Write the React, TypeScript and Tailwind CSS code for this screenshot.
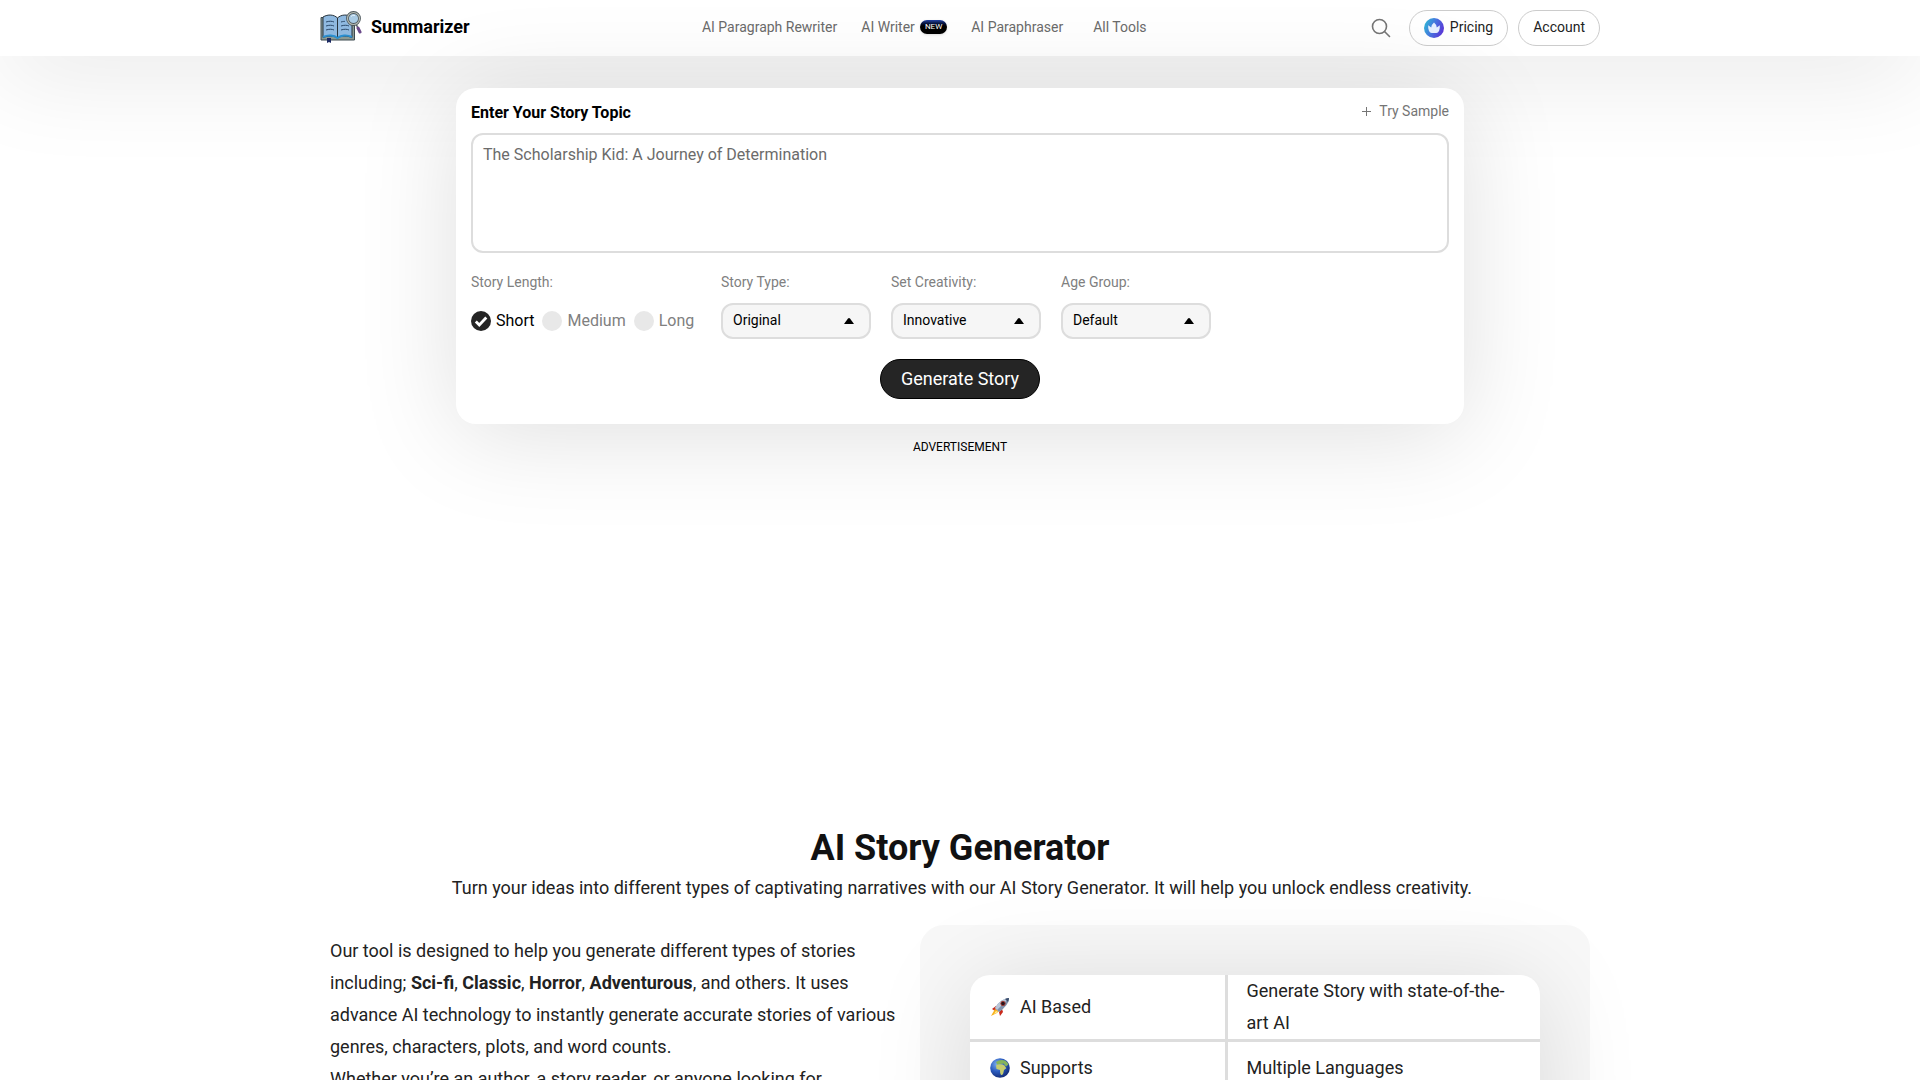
import React, { useState } from 'react';

const navLinks = [
  { label: 'AI Paragraph Rewriter', isNew: false },
  { label: 'AI Writer', isNew: true },
  { label: 'AI Paraphraser', isNew: false },
];

const lengths = ['Short', 'Medium', 'Long'];

const selects = [
  { id: 'story-type', label: 'Story Type:', options: ['Original', 'Classic', 'Humor', 'Sci-fi', 'Horror'] },
  { id: 'creativity', label: 'Set Creativity:', options: ['Innovative', 'Visionary', 'Conservative'] },
  { id: 'age-group', label: 'Age Group:', options: ['Default', 'Children', 'Teenager', 'Adult'] },
];

const LogoIcon = () => (
  <svg width="42" height="32" viewBox="0 0 42 32" className="shrink-0" aria-hidden="true">
    <path d="M1 6.500v22.500h33.500V8z" fill="#8b9a94" stroke="#3c4a50" strokeWidth="1" />
    <path d="M17.500 27C14 24.500 8 24.500 3 26.500V6C8 3 14 3.500 17.500 7z" fill="#8fb9e0" stroke="#27333c" strokeWidth="1" />
    <path d="M17.500 27C21 24.500 27 24.500 32 26.500V6C27 3 21 3.500 17.500 7z" fill="#8fb9e0" stroke="#27333c" strokeWidth="1" />
    <path d="M3 26c5-2.500 11-2 14.500 1 3.500-3 9.500-3.500 14.500-1" fill="none" stroke="#2a8fd0" strokeWidth="2" />
    <path d="M6 11c3-1 6-1 8 0M6 15c3-1 6-1 8 0M6 19c3-1 6-1 8 0M21 15c3-1 6-1 8 0M21 19c3-1 6-1 8 0M21 11c2-.6 3-.6 4-.6" fill="none" stroke="#2c4a6b" strokeWidth="1" />
    <path d="M7 27h4v5l-2-1-2 1z" fill="#1c2a63" />
    <path d="m36 13 1.500 3" stroke="#555f60" strokeWidth="1.500" />
    <path d="m38 17 2 4" stroke="#6b4a8a" strokeWidth="3" strokeLinecap="round" />
    <circle cx="33.500" cy="7.500" r="6" fill="#a9cbe4" stroke="#4b565b" strokeWidth="2.800" />
    <circle cx="33.500" cy="7.500" r="6" fill="none" stroke="#b4bbb4" strokeWidth="1.200" />
    <path d="M31 5.500q1.500-2 4-1" fill="none" stroke="#e4f0f8" strokeWidth="1" />
  </svg>
);

const CrownIcon = () => (
  <svg width="20" height="20" viewBox="0 0 20 20" aria-hidden="true">
    <defs>
      <linearGradient id="crown-bg" x1="0" y1="0.300" x2="1" y2="0.700">
        <stop offset="0" stopColor="#2fb5d6" />
        <stop offset="0.500" stopColor="#4a6fe0" />
        <stop offset="1" stopColor="#5b32d6" />
      </linearGradient>
    </defs>
    <circle cx="10" cy="10" r="10" fill="url(#crown-bg)" />
    <path d="M4.200 7.200 7.200 9.400Q7.600 6.300 10 4.400q2.400 1.900 2.800 5l3-2.200q.3 3.300-.7 5.600-.9 2.200-2.800 2.200H7.700q-1.900 0-2.800-2.200-1-2.300-.7-5.600z" fill="#e6efff" />
  </svg>
);

const SearchIcon = () => (
  <svg width="20" height="20" viewBox="0 0 20 20" fill="none" stroke="#757575" strokeWidth="1.600" aria-hidden="true">
    <circle cx="8.500" cy="8.500" r="7" />
    <path d="m13.500 13.500 5 5" strokeLinecap="round" />
  </svg>
);

const Header = () => (
  <header className="bg-white shadow-[0_10px_100px_rgba(0,0,0,0.13)]">
    <div className="mx-auto flex h-14 max-w-[1280px] items-center justify-between">
      <a href="#" className="flex items-center gap-[9px] pb-0.5 text-lg font-bold text-black">
        <LogoIcon />
        Summarizer
      </a>
      <nav className="flex items-center gap-6 pb-0.5 pl-2 text-sm text-[#6b6b6b]">
        {navLinks.map((link) => (
          <a key={link.label} href="#" className="flex items-center gap-[5px]">
            {link.label}
            {link.isNew && (
              <span className="rounded-full bg-linear-to-b from-[#2746a8] to-black to-50% px-[5px] text-[8px] leading-[14px] text-white shadow-sm">NEW</span>
            )}
          </a>
        ))}
        <a href="#" className="ml-1.5">All Tools</a>
      </nav>
      <div className="flex items-center gap-2.5 text-sm text-[#222]">
        <button type="button" aria-label="Search" className="mr-2">
          <SearchIcon />
        </button>
        <a href="#" className="flex h-9 items-center gap-1.5 rounded-full border border-[#ccc] bg-white px-3.5">
          <CrownIcon />
          <span className="pb-0.5">Pricing</span>
        </a>
        <a href="#" className="flex h-9 items-center rounded-full border border-[#ccc] bg-white px-3.5 pb-0.5">Account</a>
      </div>
    </div>
  </header>
);

const StoryForm = () => {
  const [topic, setTopic] = useState('');
  const [length, setLength] = useState('Short');

  return (
    <form
      onSubmit={(e) => e.preventDefault()}
      className="relative mx-auto mt-8 max-w-[1008px] rounded-[20px] bg-white px-[15px] pt-[13px] pb-[25px] shadow-[0_10px_100px_rgba(0,0,0,0.13)]"
    >
      <div className="flex h-8 items-start justify-between">
        <label htmlFor="topic" className="text-base font-bold text-black">Enter Your Story Topic</label>
        <button
          type="button"
          onClick={() => setTopic('The Scholarship Kid: A Journey of Determination')}
          className="flex items-center gap-2 text-sm text-[#757575]"
        >
          <svg width="9" height="9" viewBox="0 0 9 9" stroke="#757575" aria-hidden="true">
            <path d="M4.500 0v9M0 4.500h9" />
          </svg>
          Try Sample
        </button>
      </div>
      <textarea
        id="topic"
        value={topic}
        onChange={(e) => setTopic(e.target.value)}
        placeholder="The Scholarship Kid: A Journey of Determination"
        className="block h-[120px] w-full resize-none rounded-xl border-2 border-[#ddd] px-2.5 py-2 text-base placeholder:text-[#6b6b6b]"
      />
      <div className="mt-[18px] flex gap-5">
        <fieldset className="w-[230px]">
          <legend className="text-sm leading-[22px] text-[#808080]">Story Length:</legend>
          <div className="mt-2.5 flex h-9 items-center gap-2">
            {lengths.map((item) => (
              <label key={item} className="flex items-center gap-[5px] text-[#808080] has-checked:text-black">
                <span className="grid size-5">
                  <input
                    type="radio"
                    name="length"
                    checked={length === item}
                    onChange={() => setLength(item)}
                    className="peer col-start-1 row-start-1 size-5 appearance-none rounded-full bg-[#e8e8e8] checked:bg-[#252525]"
                  />
                  <svg viewBox="0 0 20 20" className="pointer-events-none invisible col-start-1 row-start-1 size-5 peer-checked:visible" fill="none" stroke="#fff" strokeWidth="2.800" aria-hidden="true">
                    <path d="m4.800 10.500 3.500 3.500 7-7.500" />
                  </svg>
                </span>
                {item}
              </label>
            ))}
          </div>
        </fieldset>
        {selects.map((select) => (
          <div key={select.id} className="w-[150px]">
            <label htmlFor={select.id} className="block text-sm leading-[22px] text-[#808080]">{select.label}</label>
            <div className="mt-2.5 grid items-center">
              <select id={select.id} className="col-start-1 row-start-1 h-9 w-full appearance-none rounded-xl border-2 border-[#ddd] bg-[#f6f6f6] px-2.5 pb-0.5 text-sm text-black">
                {select.options.map((option) => (
                  <option key={option}>{option}</option>
                ))}
              </select>
              <svg width="10" height="6" viewBox="0 0 10 6" className="pointer-events-none col-start-1 row-start-1 mr-[17px] justify-self-end" aria-hidden="true">
                <path d="M0 6 4 .5q1-.8 2 0L10 6z" />
              </svg>
            </div>
          </div>
        ))}
      </div>
      <button type="submit" className="mx-auto mt-5 block h-10 w-40 rounded-full border border-black bg-[#252525] text-lg text-white">
        Generate Story
      </button>
    </form>
  );
};

const RocketIcon = () => (
  <svg width="20" height="20" viewBox="0 0 20 20" aria-hidden="true">
    <path d="M2 12 6 9l3 2-4 3z" fill="#c92a1c" />
    <path d="m9 15 3-3 1 3-3 4z" fill="#c92a1c" />
    <path d="M5 12 1 19l6-3 2-2z" fill="#f8b21c" />
    <path d="m6 14-2 3 4-2z" fill="#fff1a0" />
    <path d="M5 11Q10 2 19 1q0 7-10 14z" fill="#7f93ae" />
    <path d="M5 11Q10 2 19 1L7 13z" fill="#b9c6d8" />
    <path d="M15 2q2-1 4-1 0 2-1 4z" fill="#3a4d6c" />
    <circle cx="13" cy="6.500" r="2.200" fill="#2b1720" stroke="#b4382d" strokeWidth="0.800" />
  </svg>
);

const GlobeIcon = () => (
  <svg width="20" height="20" viewBox="0 0 20 20" aria-hidden="true">
    <defs>
      <radialGradient id="globe-bg" cx="0.350" cy="0.300" r="0.750">
        <stop offset="0" stopColor="#7fb0ee" />
        <stop offset="0.500" stopColor="#2b5cc0" />
        <stop offset="1" stopColor="#132a72" />
      </radialGradient>
    </defs>
    <circle cx="10" cy="10" r="9.800" fill="url(#globe-bg)" />
    <path d="M6 7.500q1-1.500 4-1.300 3 0 4.500 1.300l1.800 2.700-2.300 1.800-.8 3.500q-1 2-2.200 1.500-1.200-2-1-5L6.500 11z" fill="#c6cc6e" />
    <path d="M6 4q4-3 9-1.500 2.500 1.500 3.500 4l-2.500 2-2.500-3-3.500.5-3 .5z" fill="#86b55a" />
  </svg>
);

const features = [
  { name: 'AI Based', icon: <RocketIcon />, value: 'Generate Story with state-of-the-art AI' },
  { name: 'Supports', icon: <GlobeIcon />, value: 'Multiple Languages' },
];

const About = () => (
  <main className="mx-auto max-w-[1280px] px-2.5 text-lg text-[#222]">
    <h1 className="text-center text-4xl leading-[44px] font-bold text-[#111]">AI Story Generator</h1>
    <p className="mt-0.5 pl-1 text-center leading-8">
      Turn your ideas into different types of captivating narratives with our AI Story Generator. It will help you unlock endless creativity.
    </p>
    <div className="mt-[21px] flex justify-between gap-5">
      <div className="flex-1 pt-2.5 leading-8">
        <p>
          Our tool is designed to help you generate different types of stories including; <strong>Sci-fi</strong>, <strong>Classic</strong>, <strong>Horror</strong>, <strong>Adventurous</strong>, and others. It uses advance AI technology to instantly generate accurate stories of various genres, characters, plots, and word counts.
        </p>
        <p>
          Whether you’re an author, a story reader, or anyone looking for inspiration, our tool will help you write engaging stories.
        </p>
      </div>
      <div className="w-[670px] rounded-3xl bg-[#f8f8f8] p-[50px]">
        <div className="min-h-[270px] overflow-hidden rounded-[20px] bg-white shadow-[0_10px_100px_rgba(0,0,0,0.13)]">
          <table className="w-full table-fixed leading-8">
            <colgroup>
              <col className="w-[256px]" />
              <col />
            </colgroup>
            <tbody>
              {features.map((feature) => (
                <tr key={feature.name} className="h-[54px] border-b-3 border-[#ddd]">
                  <td className="border-r-3 border-[#ddd] px-5">
                    <span className="flex items-center gap-2.5">
                      {feature.icon}
                      {feature.name}
                    </span>
                  </td>
                  <td className="pr-5 pl-[19px]">{feature.value}</td>
                </tr>
              ))}
            </tbody>
          </table>
        </div>
      </div>
    </div>
  </main>
);

const App: React.FC = () => {
  return (
    <div className="h-screen overflow-hidden bg-white font-[Roboto,sans-serif]">
      <Header />
      <StoryForm />
      <aside className="relative h-[402px] pt-3.5 text-center text-xs leading-[18px] text-black">ADVERTISEMENT</aside>
      <About />
    </div>
  );
};

export default App;
